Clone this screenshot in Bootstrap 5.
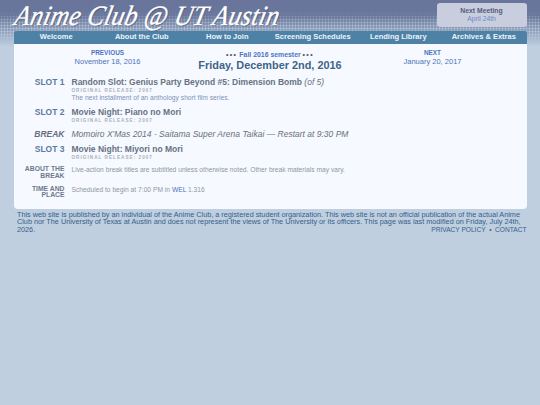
<!DOCTYPE html>
<html lang="en">
<head>
<meta charset="utf-8">
<title>Anime Club @ UT Austin</title>
<link href="https://cdn.jsdelivr.net/npm/bootstrap@5.3.0/dist/css/bootstrap.min.css" rel="stylesheet">
<style>
html,body{height:100%}
body{background:#bfcfe0;font-family:"Liberation Sans",Arial,sans-serif;color:#556;font-size:8px;line-height:1.1;position:relative}
body::before{content:"";position:absolute;left:0;right:0;top:0;height:46px;z-index:-1;background:linear-gradient(#68749a 0,#6a779c 16px,#95a5bf 32px,#bfcfe0 46px)}
body::after{content:"";position:absolute;left:0;right:0;top:12px;height:34px;z-index:-1;background:radial-gradient(circle,#b4c4d8 .8px,transparent 1.2px) 0 0/3px 3px;-webkit-mask-image:linear-gradient(transparent,#000 45%,#000 70%,transparent);mask-image:linear-gradient(transparent,#000 45%,#000 70%,transparent)}
.mast{height:31px;padding:0 13.5px}
.logo{font:italic 400 28px/28px "Liberation Serif",serif;color:#fff;white-space:nowrap;width:310px;margin-left:-2px;padding-top:2px;transform:scaleX(.9) skewX(-14deg);transform-origin:0 100%;letter-spacing:.35px;-webkit-text-stroke:.4px #fff;text-shadow:1px 1px 1px #4a5578}
.meet{width:90px;height:24px;margin-top:3px;background:#c9cedf;border-radius:3px;text-align:center;font-size:6.8px;line-height:8px;padding-top:4px;color:#565a7c;font-weight:700}
.meet span{display:block;font-weight:400;color:#6d8ac6}
.wrapbox{padding:0 13.5px}
.menu{height:12.5px;background:#4d82a6;border-radius:2px 2px 0 0}
.menu a{color:#eef3f9;font-size:7.5px;font-weight:700;line-height:12.5px;text-decoration:none;white-space:nowrap;display:block;text-align:center}
.panel{background:#f6f9ff;border-radius:0 0 4px 4px;height:165px}
.dates{height:33px;position:relative}
.pn{text-align:center;position:absolute;top:4px;font-size:7.5px;line-height:9px;color:#4a75b8;width:90px}
.pn b{display:block;font-size:6.4px;line-height:9px;color:#4e73c4}
.center{position:absolute;left:0;right:0;top:6.5px;text-align:center}
.sem{font-size:6.9px;font-weight:700;color:#4e73c4;line-height:9px}
.sem i{font-style:normal;color:#556;letter-spacing:1.4px}
.day{font-size:10.9px;font-weight:700;color:#3e6488;line-height:13px}
.rowi{display:flex;gap:7px}
.lab{width:51px;flex:none;text-align:right}
.slot{font-size:8.5px;line-height:10px;font-weight:700;color:#5d7a9e}
.brk{font-style:italic;color:#666e7e}
.ttl{font-size:8.5px;line-height:10px;font-weight:700;color:#667283;white-space:nowrap}
.ital{font-style:italic;font-weight:400;color:#6a707c}
.rel{font-size:4.6px;line-height:6px;letter-spacing:1.05px;font-weight:700;color:#a9b0bb;margin-top:1px}
.desc{font-size:6.7px;line-height:8px;color:#7c93b8}
.sm{font-size:6.8px;line-height:6.8px;font-weight:700;color:#6d7a8c}
.note{font-size:6.7px;line-height:7px;color:#9097a4}
.note a{color:#4a75c0;text-decoration:none}
.foot{padding:2.5px 13.5px 0 17px;font-size:7.28px;line-height:7.1px;color:#36608a}
.foot p{margin:0}
.lastline{margin-top:1.3px}
.fl{font-size:6.6px;line-height:7.1px}
</style>
</head>
<body>
<div class="mast d-flex justify-content-between">
  <div class="logo">Anime Club @ UT Austin</div>
  <div class="meet">Next Meeting<span>April 24th</span></div>
</div>
<div class="wrapbox">
  <nav class="menu row g-0">
    <div class="col-2"><a href="#">Welcome</a></div>
    <div class="col-2"><a href="#">About the Club</a></div>
    <div class="col-2"><a href="#">How to Join</a></div>
    <div class="col-2"><a href="#">Screening Schedules</a></div>
    <div class="col-2"><a href="#">Lending Library</a></div>
    <div class="col-2"><a href="#">Archives &amp; Extras</a></div>
  </nav>
  <main class="panel">
    <div class="dates">
      <div class="center">
        <div class="sem"><i>•••</i> Fall 2016 semester <i>•••</i></div>
        <div class="day">Friday, December 2nd, 2016</div>
      </div>
      <div class="pn" style="left:49px"><b>PREVIOUS</b>November 18, 2016</div>
      <div class="pn" style="left:374px"><b>NEXT</b>January 20, 2017</div>
    </div>
    <div class="rowi">
      <div class="lab slot">SLOT 1</div>
      <div><div class="ttl">Random Slot: Genius Party Beyond #5: Dimension Bomb <span class="ital">(of 5)</span></div>
      <div class="rel">ORIGINAL RELEASE: 2007</div><div class="desc">The next installment of an anthology short film series.</div></div>
    </div>
    <div class="rowi" style="margin-top:5.5px">
      <div class="lab slot">SLOT 2</div>
      <div><div class="ttl">Movie Night: Piano no Mori</div><div class="rel">ORIGINAL RELEASE: 2007</div></div>
    </div>
    <div class="rowi" style="margin-top:5px">
      <div class="lab slot brk">BREAK</div>
      <div class="ttl ital">Momoiro X'Mas 2014 - Saitama Super Arena Taikai — Restart at 9:30 PM</div>
    </div>
    <div class="rowi" style="margin-top:4.5px">
      <div class="lab slot">SLOT 3</div>
      <div><div class="ttl">Movie Night: Miyori no Mori</div><div class="rel">ORIGINAL RELEASE: 2007</div></div>
    </div>
    <div class="rowi" style="margin-top:5.5px">
      <div class="lab sm">ABOUT THE BREAK</div>
      <div class="note">Live-action break titles are subtitled unless otherwise noted. Other break materials may vary.</div>
    </div>
    <div class="rowi" style="margin-top:6px">
      <div class="lab sm">TIME AND PLACE</div>
      <div class="note">Scheduled to begin at 7:00 PM in <a href="#">WEL</a> 1.316</div>
    </div>
  </main>
</div>
<footer class="foot">
  <p>This web site is published by an individual of the Anime Club, a registered student organization. This web site is not an official publication of the actual Anime Club nor The University of Texas at Austin and does not represent the views of The University or its officers. This page was last modified on Friday, July 24th,</p>
  <div class="lastline d-flex justify-content-between"><span>2026.</span><span class="fl">PRIVACY POLICY &nbsp;•&nbsp; CONTACT</span></div>
</footer>
<script src="https://cdn.jsdelivr.net/npm/bootstrap@5.3.0/dist/js/bootstrap.bundle.min.js"></script>
</body>
</html>
